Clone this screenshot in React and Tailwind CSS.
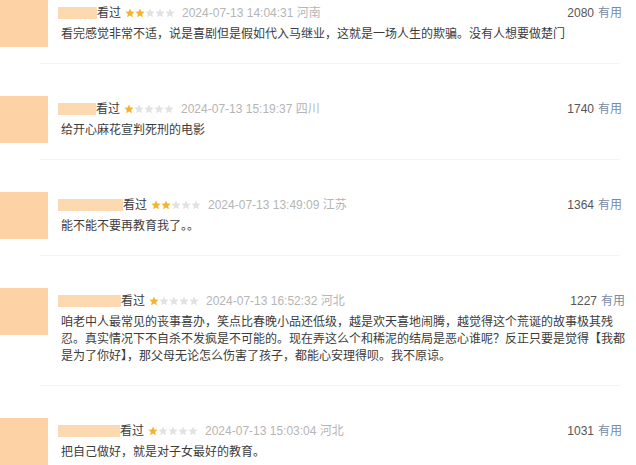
const comments = [
  {
    nameW: 39,
    stars: 2,
    time: "2024-07-13 14:04:31",
    place: "河南",
    votes: 2080,
    lines: ["看完感觉非常不适，说是喜剧但是假如代入马继业，这就是一场人生的欺骗。没有人想要做楚门"],
  },
  {
    nameW: 38,
    stars: 1,
    time: "2024-07-13 15:19:37",
    place: "四川",
    votes: 1740,
    lines: ["给开心麻花宣判死刑的电影"],
  },
  {
    nameW: 65,
    stars: 2,
    time: "2024-07-13 13:49:09",
    place: "江苏",
    votes: 1364,
    lines: ["能不能不要再教育我了。。"],
  },
  {
    nameW: 63,
    stars: 1,
    time: "2024-07-13 16:52:32",
    place: "河北",
    votes: 1227,
    lines: [
      "咱老中人最常见的丧事喜办，笑点比春晚小品还低级，越是欢天喜地闹腾，越觉得这个荒诞的故事极其残",
      "忍。真实情况下不自杀不发疯是不可能的。现在弄这么个和稀泥的结局是恶心谁呢？反正只要是觉得【我都",
      "是为了你好】，那父母无论怎么伤害了孩子，都能心安理得呗。我不原谅。",
    ],
  },
  {
    nameW: 62,
    stars: 1,
    time: "2024-07-13 15:03:04",
    place: "河北",
    votes: 1031,
    lines: ["把自己做好，就是对子女最好的教育。"],
  },
];

function Star({ on }) {
  return (
    <svg width="10" height="10" viewBox="0 0 10 10">
      <polygon
        points="5,0.4 6.3,3.5 9.6,3.7 7.1,5.9 7.9,9.3 5,7.5 2.1,9.3 2.9,5.9 0.4,3.7 3.7,3.5"
        fill={on ? "#f6b22b" : "#e2e2e2"}
      />
    </svg>
  );
}

function Comment({ c, last }) {
  return (
    <div className={last ? "" : "mb-[32px]"}>
      <div className="flex items-start">
        <div className="w-[48px] h-[47px] shrink-0 bg-[#fdd2a4]" />
        <div className="flex-1 ml-[10px] mr-[14px] pt-[4px] pb-[20px]">
          <div className="flex items-center h-[18px] text-[12px] leading-[18px]">
            <div className="h-[12px] bg-[#fdd9b2]" style={{ width: c.nameW }} />
            <span className="text-[#3a3a3a]">看过</span>
            <div className="flex ml-[4px]">
              {[0, 1, 2, 3, 4].map((i) => (
                <Star key={i} on={i < c.stars} />
              ))}
            </div>
            <span className="ml-[7px] text-[#b5b5b5]">{c.time} {c.place}</span>
            <span className="ml-auto text-[#555]">{c.votes}</span>
            <span className="ml-[4px] text-[#7a8aa3]">有用</span>
          </div>
          <div className="mt-[4px] ml-[3px] text-[12px] leading-[17px] text-[#3c3c3c]">
            {c.lines.map((l, i) => (
              <div key={i} className="whitespace-nowrap">{l}</div>
            ))}
          </div>
        </div>
      </div>
      {!last && <div className="ml-[40px] mr-[16px] h-px bg-[#f4f4f4]" />}
    </div>
  );
}

export default function App() {
  return (
    <div
      className="w-[636px] h-[465px] overflow-hidden bg-white"
      style={{ fontFamily: '"Liberation Sans", "Noto Sans CJK SC", sans-serif' }}
    >
      {comments.map((c, i) => (
        <Comment key={i} c={c} last={i === comments.length - 1} />
      ))}
    </div>
  );
}
